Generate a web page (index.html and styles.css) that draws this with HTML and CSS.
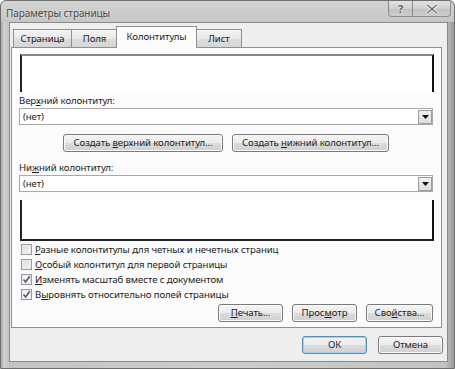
FILE: index.html
```html
<!DOCTYPE html>
<html lang="ru">
<head>
<meta charset="utf-8">
<title>Параметры страницы</title>
<link rel="stylesheet" href="styles.css">
</head>
<body>
<div class="window">
  <div class="titlebar">
    <span class="title">Параметры страницы</span>
    <div class="caption">
      <span class="cap-btn cap-help">?</span>
      <span class="cap-btn cap-close"><svg width="12" height="10" viewBox="0 0 12 10"><path d="M1.5 1 L10.5 9 M10.5 1 L1.5 9" stroke="#f4f4f4" stroke-width="3.2"/><path d="M1.5 1 L10.5 9 M10.5 1 L1.5 9" stroke="#6a6a6a" stroke-width="1.4"/></svg></span>
    </div>
  </div>
  <div class="client">
    <div class="tabs">
      <span class="tab tab-1">Страница</span>
      <span class="tab tab-2">Поля</span>
      <span class="tab active">Колонтитулы</span>
      <span class="tab tab-4">Лист</span>
    </div>
    <div class="panel">
      <div class="preview preview-top"></div>
      <div class="label">Вер<u>х</u>ний колонтитул:</div>
      <div class="combo"><span class="combo-text">(нет)</span><span class="drop"><svg width="7" height="4" viewBox="0 0 7 4"><path d="M0 0 H7 L3.5 4 Z" fill="#111"/></svg></span></div>
      <div class="create-row">
        <span class="btn btn-create1">Создать <u>в</u>ерхний колонтитул...</span>
        <span class="btn btn-create2">Создать <u>н</u>ижний колонтитул...</span>
      </div>
      <div class="label label-footer">Ни<u>ж</u>ний колонтитул:</div>
      <div class="combo"><span class="combo-text">(нет)</span><span class="drop"><svg width="7" height="4" viewBox="0 0 7 4"><path d="M0 0 H7 L3.5 4 Z" fill="#111"/></svg></span></div>
      <div class="preview preview-bottom"></div>
      <div class="checks">
        <div class="check"><span class="box"></span><span><u>Р</u>азные колонтитулы для четных и нечетных страниц</span></div>
        <div class="check"><span class="box"></span><span><u>О</u>собый колонтитул для первой страницы</span></div>
        <div class="check"><span class="box checked"><svg width="9" height="9" viewBox="0 0 9 9"><path d="M1.5 4.5 L3.6 7 L7.8 1.2" fill="none" stroke="#4a5a78" stroke-width="1.6"/></svg></span><span><u>И</u>зменять масштаб вместе с документом</span></div>
        <div class="check"><span class="box checked"><svg width="9" height="9" viewBox="0 0 9 9"><path d="M1.5 4.5 L3.6 7 L7.8 1.2" fill="none" stroke="#4a5a78" stroke-width="1.6"/></svg></span><span>В<u>ы</u>ровнять относительно полей страницы</span></div>
      </div>
      <div class="panel-buttons">
        <span class="btn"><u>П</u>ечать...</span>
        <span class="btn">Прос<u>м</u>отр</span>
        <span class="btn btn-props">Сво<u>й</u>ства...</span>
      </div>
    </div>
    <div class="dialog-buttons">
      <span class="btn btn-default">ОК</span>
      <span class="btn">Отмена</span>
    </div>
  </div>
</div>
</body>
</html>
```

FILE: styles.css
```css
* { box-sizing: border-box; }
html, body { margin: 0; padding: 0; }
body {
  width: 455px;
  height: 369px;
  overflow: hidden;
  font-family: "Noto Sans", "Open Sans", sans-serif;
  font-size: 9.6px;
  letter-spacing: -0.1px;
  color: #1c1c1c;
  background: #fff;
}
u { text-decoration: underline; text-underline-offset: 1px; }

.window {
  width: 455px;
  height: 369px;
  display: flex;
  flex-direction: column;
  background: linear-gradient(90deg, #a9a9a9 0px, #d0d0d0 3px, #c4c4c4 8px, #cdcdcd 50%, #c2c2c2 98%, #9a9a9a 100%);
  border: 1px solid #6f6f6f;
  border-radius: 6px 6px 0 0;
}

.titlebar {
  height: 21px;
  display: flex;
  align-items: flex-start;
  background: linear-gradient(180deg, #d4d4d4 0%, #c6c6c6 100%);
  border-radius: 6px 6px 0 0;
}
.title {
  padding: 5px 0 0 5px;
  font-size: 10px;
  color: #4a4a4a;
  line-height: 14px;
  white-space: nowrap;
  text-shadow: 0 0 3px #e8e8e8;
}
.caption {
  margin-left: auto;
  margin-right: 3px;
  display: flex;
  height: 16px;
  border: 1px solid #8c8c8c;
  border-top: none;
  border-radius: 0 0 4px 4px;
  overflow: hidden;
  background: linear-gradient(180deg, #e2e2e2 0%, #cfcfcf 50%, #c2c2c2 51%, #cdcdcd 100%);
}
.cap-btn {
  display: flex;
  align-items: center;
  justify-content: center;
  height: 15px;
}
.cap-help {
  width: 24px;
  border-right: 1px solid #8c8c8c;
  font-weight: bold;
  font-size: 11px;
  color: #5a5a5a;
  text-shadow: 0 0 2px #fff;
}
.cap-close { width: 37px; }

.client {
  margin: 0 6px 6px 8px;
  flex: 1;
  background: #eeeeee;
  border: 1px solid #8a8a8a;
  display: flex;
  flex-direction: column;
}

.tabs {
  display: flex;
  align-items: flex-end;
  height: 24px;
  padding-left: 2px;
  margin-left: 1px;
}
.tab {
  height: 18px;
  line-height: 17px;
  text-align: center;
  white-space: nowrap;
  border: 1px solid #8f8f8f;
  border-bottom: none;
  margin-right: -1px;
  background: linear-gradient(180deg, #f4f4f4 0%, #e8e8e8 50%, #dcdcdc 51%, #d6d6d6 100%);
}
.tab-1 { width: 59px; }
.tab-2 { width: 47px; }
.tab.active {
  height: 22px;
  line-height: 19px;
  width: 81px;
  background: #fbfbfb;
  position: relative;
  z-index: 1;
  margin-bottom: -1px;
  margin-left: -1px;
  margin-right: -1px;
}
.tab-4 { width: 46px; }

.panel {
  margin-left: 1px;
  width: 431px;
  height: 281px;
  background: #fbfbfb;
  border: 1px solid #8f8f8f;
  padding: 6px 7px 0 7px;
  display: flex;
  flex-direction: column;
}

.preview {
  height: 38px;
  margin-left: 1px;
  background: #fff;
  border-left: 2px solid #222;
  border-right: 2px solid #111;
}
.preview-top { border-top: 2px solid #888; }
.preview-bottom {
  height: 41px;
  margin-top: 8px;
  border-bottom: 2px solid #222;
}

.label {
  margin-top: 2px;
  height: 14px;
  line-height: 14px;
  white-space: nowrap;
}
.label-footer { margin-top: 9px; }

.combo {
  height: 17px;
  width: 414px;
  border: 1px solid #a9a9a9;
  background: #fff;
  display: flex;
  align-items: center;
  justify-content: space-between;
}
.combo-text { padding-left: 3px; }
.drop {
  width: 14px;
  height: 14px;
  border: 1px solid #9c9c9c;
  background: linear-gradient(180deg, #f0f0f0 0%, #dedede 100%);
  display: flex;
  align-items: center;
  justify-content: center;
}

.btn {
  display: block;
  height: 18px;
  line-height: 16px;
  text-align: center;
  white-space: nowrap;
  border: 1px solid #7a7a7a;
  border-radius: 3px;
  background: linear-gradient(180deg, #f4f4f4 0%, #ebebeb 50%, #dcdcdc 51%, #d0d0d0 100%);
  box-shadow: inset 0 0 0 1px #fafafa;
}

.create-row {
  display: flex;
  margin-top: 9px;
  padding-left: 44px;
  gap: 9px;
}
.btn-create1 { width: 160px; }
.btn-create2 { width: 157px; }

.checks {
  margin-top: 1px;
  display: flex;
  flex-direction: column;
}
.check {
  height: 15px;
  display: flex;
  align-items: center;
  gap: 3px;
  padding-left: 2px;
  white-space: nowrap;
}
.box {
  width: 11px;
  height: 11px;
  border: 1px solid #9a9a9a;
  background: linear-gradient(135deg, #dcdcdc 0%, #f4f4f4 100%);
  box-shadow: inset 0 0 0 1px #ececec;
  display: flex;
  align-items: center;
  justify-content: center;
}
.box.checked { background: #f4f4f6; }

.panel-buttons {
  margin-top: 2px;
  display: flex;
  justify-content: flex-end;
  gap: 9px;
  padding-right: 1px;
}
.panel-buttons .btn { width: 65px; }
.panel-buttons .btn-props { width: 67px; }

.dialog-buttons {
  display: flex;
  justify-content: flex-end;
  gap: 11px;
  margin-top: 8px;
  padding-right: 4px;
}
.dialog-buttons .btn { width: 65px; }
.btn-default {
  border-color: #5d8db0;
  box-shadow: inset 0 0 0 1px #9fd0ec;
}
```
